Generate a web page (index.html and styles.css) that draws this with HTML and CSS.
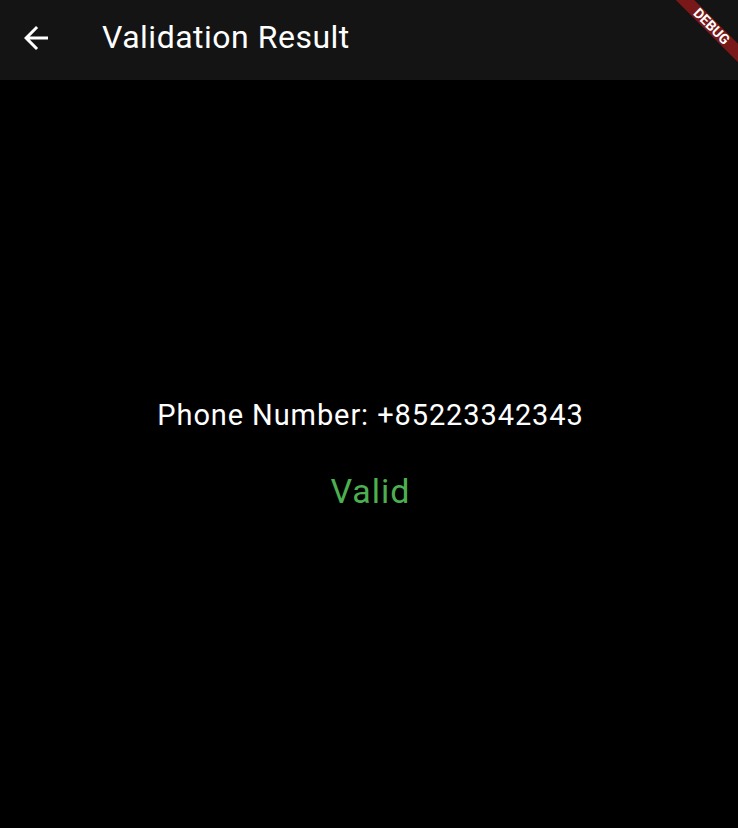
FILE: index.html
```html
<!DOCTYPE html>
<html>
<head>
<meta charset="utf-8">
<link rel="stylesheet" href="styles.css">
</head>
<body>
<div class="app">
  <header class="appbar">
    <button class="back" aria-label="Back">
      <svg viewBox="0 0 24 24" width="36" height="36"><path fill="#fff" d="M20 11H7.83l5.59-5.59L12 4l-8 8 8 8 1.41-1.41L7.83 13H20v-2z"/></svg>
    </button>
    <h1 class="title">Validation Result</h1>
  </header>
  <main class="content">
    <p class="phone">Phone Number: +85223342343</p>
    <p class="status">Valid</p>
  </main>
  <div class="banner"><span>DEBUG</span></div>
</div>
</body>
</html>
```
FILE: styles.css
```css
html, body {
  margin: 0;
  padding: 0;
  background: #000;
}
.app {
  width: 738px;
  height: 828px;
  display: flex;
  flex-direction: column;
  position: relative;
  overflow: hidden;
  font-family: Roboto, "Liberation Sans", sans-serif;
}
.appbar {
  height: 80px;
  flex: none;
  background: #141414;
  display: flex;
  align-items: center;
  padding-bottom: 5px;
  box-sizing: border-box;
}
.back {
  width: 36px;
  height: 36px;
  margin-left: 18px;
  padding: 0;
  border: 0;
  background: none;
  display: flex;
}
.title {
  margin: 0 0 1px 48px;
  font-size: 32px;
  letter-spacing: 0.5px;
  font-weight: 400;
  color: #fff;
}
.content {
  flex: 1;
  display: flex;
  flex-direction: column;
  align-items: center;
  justify-content: center;
}
.phone {
  margin: 0 0 0 3px;
  font-size: 29px;
  letter-spacing: 0.9px;
  line-height: 36px;
  color: #fff;
}
.status {
  margin: 38px 0 0 3px;
  font-size: 34px;
  letter-spacing: 1px;
  line-height: 40px;
  color: #4caf50;
}
.banner {
  position: absolute;
  top: 0;
  right: 0;
  width: 0;
  height: 0;
}
.banner span {
  position: absolute;
  left: -60px;
  top: 31px;
  width: 120px;
  height: 13px;
  transform-origin: 60px -31px;
  transform: rotate(45deg);
  background: #791818;
  color: #fff;
  font-size: 14px;
  font-weight: 700;
  line-height: 13px;
  text-align: center;
}
```
